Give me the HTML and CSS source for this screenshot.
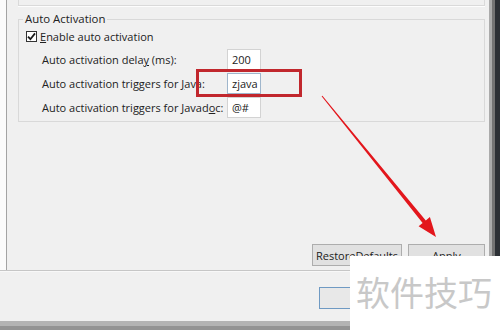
FILE: index.html
```html
<!DOCTYPE html>
<html>
<head>
<meta charset="utf-8">
<link rel="stylesheet" href="styles.css">
</head>
<body>
<div class="screen">
  <div class="top">
    <div class="strip"></div>
    <div class="content">
      <div class="prev-group"></div>
      <fieldset class="group">
        <legend class="group-title">Auto Activation</legend>
        <div class="check-row">
          <span class="checkbox"><svg width="9" height="9" viewBox="0 0 9 9"><path d="M1 4.6 L3.4 7.2 L8 1.4" fill="none" stroke="#1a1a1a" stroke-width="1.8"/></svg></span>
          <span><u>E</u>nable auto activation</span>
        </div>
        <div class="field-row">
          <span class="label">Auto activation dela<u>y</u> (ms):</span>
          <span class="field">200</span>
        </div>
        <div class="field-row">
          <span class="label">Auto activation triggers for <u>J</u>ava:</span>
          <span class="field focused">zjava</span>
        </div>
        <div class="field-row">
          <span class="label">Auto activation triggers for Javad<u>o</u>c:</span>
          <span class="field">@#</span>
        </div>
      </fieldset>
      <div class="spacer"></div>
      <div class="buttons">
        <span class="btn restore">Restore <u>D</u>efaults</span>
        <span class="btn apply"><u>A</u>pply</span>
      </div>
    </div>
    <div class="right-edge"><span class="e1"></span><span class="e2"></span><span class="e3"></span></div>
  </div>
  <div class="separator"></div>
  <div class="bottom">
    <span class="btn ok"></span>
  </div>
  <div class="taskbar"></div>

  <div class="redbox"></div>
  <svg class="arrow" width="500" height="330" viewBox="0 0 500 330">
    <polygon points="322.4,95.7 425.8,220.4 429.9,217.0 436,237 418.6,226.3 422.6,223.0 321.6,96.3" fill="#e3161c"/>
  </svg>
  <div class="watermark">软件技巧</div>
</div>
</body>
</html>
```
FILE: styles.css
```css
html, body {
  margin: 0;
  padding: 0;
}
body {
  width: 500px;
  height: 330px;
  overflow: hidden;
  background: #f0f0f0;
  font-family: "Open Sans", "Noto Sans", sans-serif;
  font-size: 11px;
  color: #222;
}
.screen {
  position: relative;
  width: 500px;
  height: 330px;
  display: flex;
  flex-direction: column;
}
.top {
  height: 271px;
  display: flex;
}
.strip {
  width: 6px;
  background: #fbfbfb;
  border-right: 1px solid #a3a3a3;
}
.content {
  flex: 1;
  display: flex;
  flex-direction: column;
  padding: 0 4px 4px 11px;
}
.prev-group {
  height: 5px;
  border: 1px solid #dadada;
  border-top: none;
  box-shadow: 0 1px 0 #fdfdfd;
}
.group {
  margin: 5px 0 0 0;
  padding: 1px 0 2px 7px;
  border: 1px solid #d9d9d9;
  min-width: 0;
}
.group-title {
  padding: 0 2px;
  margin-left: -3px;
  line-height: 16px;
  font-size: 11.4px;
}
.check-row {
  height: 16px;
  display: flex;
  align-items: center;
  gap: 3px;
  margin-bottom: 3px;
  white-space: nowrap;
}
.checkbox {
  width: 11px;
  height: 11px;
  box-sizing: border-box;
  border: 1px solid #333;
  background: #fff;
  display: flex;
  align-items: center;
  justify-content: center;
}
.field-row {
  height: 24px;
  display: flex;
  align-items: center;
  padding-left: 16px;
  white-space: nowrap;
}
.label {
  width: 185px;
}
.field {
  width: 34px;
  height: 21px;
  box-sizing: border-box;
  border: 1px solid #d3d3d3;
  background: #fff;
  padding-left: 4px;
  line-height: 19px;
}
.field.focused {
  border-color: #9fb6cc;
}
.spacer {
  flex: 1;
}
.buttons {
  display: flex;
  justify-content: flex-end;
  gap: 6px;
}
.btn {
  height: 22px;
  box-sizing: border-box;
  border: 1px solid #adadad;
  background: #e1e1e1;
  display: flex;
  align-items: center;
  justify-content: center;
  white-space: nowrap;
}
.restore {
  width: 90px;
}
.apply {
  width: 77px;
}
.right-edge {
  display: flex;
}
.e1 { width: 3px; background: #ababab; }
.e2 { width: 3px; background: #747474; }
.e3 { width: 5px; background: #2c3035; }
.separator {
  height: 1px;
  background: #c6c6c6;
  border-bottom: 1px solid #f8f8f8;
}
.bottom {
  height: 49px;
  padding: 15px 0 0 319px;
  box-sizing: border-box;
}
.ok {
  width: 84px;
  height: 22px;
  border-color: #6f9ac3;
  background: #e8e8e8;
}
.taskbar {
  height: 9px;
  background: #b3b3b3;
  border-bottom: 4px solid #939393;
  box-sizing: border-box;
}
.redbox {
  position: absolute;
  left: 196px;
  top: 69px;
  width: 106px;
  height: 28px;
  box-sizing: border-box;
  border: 3px solid #c1272d;
}
.arrow {
  position: absolute;
  left: 0;
  top: 0;
}
.watermark {
  position: absolute;
  left: 350px;
  top: 256px;
  width: 150px;
  height: 74px;
  background: #fff;
  color: #c8c8c8;
  font-family: "Noto Sans CJK SC", sans-serif;
  font-size: 34px;
  line-height: 72px;
  padding-left: 6px;
  box-sizing: border-box;
  white-space: nowrap;
}
```
